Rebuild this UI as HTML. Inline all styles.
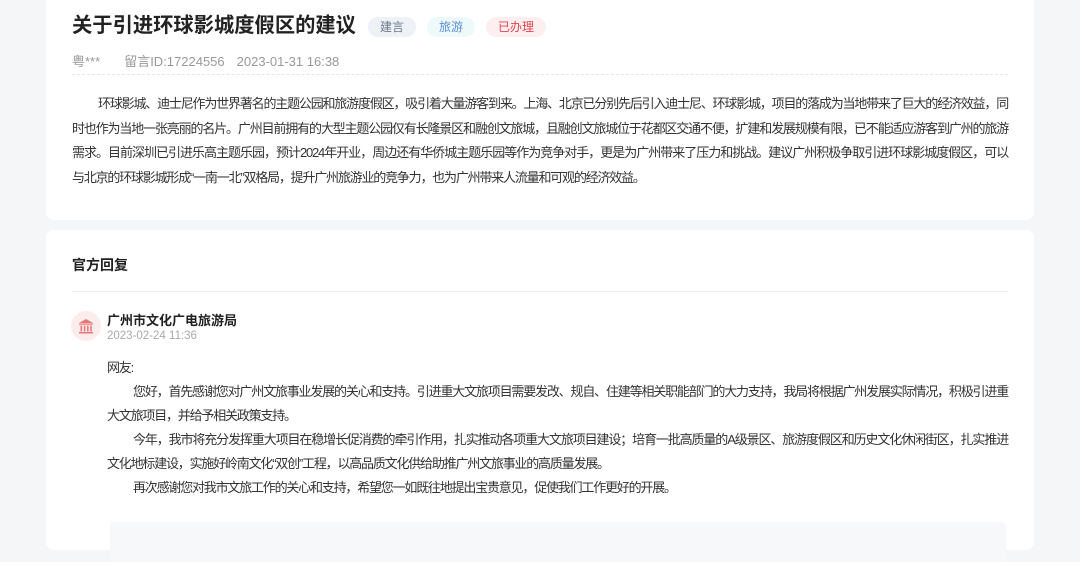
<!DOCTYPE html>
<html><head><meta charset="utf-8"><style>
body{margin:0;width:1080px;height:527px;overflow:hidden;background:#f5f6f8;font-family:"Liberation Sans","Noto Sans CJK SC",sans-serif;color:#333;}
.card{position:absolute;left:46px;width:988px;background:#fff;border-radius:8px;}
.tag{display:inline-block;height:20px;line-height:20px;padding:0 12px;border-radius:10px;font-size:12px;margin-left:8px;vertical-align:middle;font-weight:normal;}
p{margin:0;}
.j{display:block;white-space:nowrap;text-align:justify;text-align-last:justify;}
.l{display:block;white-space:nowrap;}
.i{padding-left:26px;}
</style></head><body>
<div style="position:absolute;left:72px;top:0;width:205px;height:4px;background:#eeeff2;"></div>
<div class="card" style="top:-10px;height:230px;">
 <div style="position:absolute;left:26px;top:20px;font-size:20.3px;font-weight:bold;color:#222;line-height:32px;white-space:nowrap;">关于引进环球影城度假区的建议<span class="tag" style="margin-left:12px;background:#eef2f7;color:#6a7889;">建言</span><span class="tag" style="margin-left:11px;background:#eefafa;color:#5b8fd6;">旅游</span><span class="tag" style="margin-left:11px;background:#fdeef0;color:#e0434f;">已办理</span></div>
 <div style="position:absolute;left:26px;top:61px;font-size:13px;color:#999;white-space:nowrap;">粤***<span style="margin-left:24px;">留言ID:17224556</span><span style="margin-left:12px;">2023-01-31 16:38</span></div>
 <div style="position:absolute;left:26px;right:26px;top:84px;border-top:1px dashed #e6e6e6;"></div>
 <div style="position:absolute;left:26px;width:936px;top:102px;font-size:13px;letter-spacing:-1.2px;line-height:24.5px;color:#333;">
  <span class="j i">环球影城、迪士尼作为世界著名的主题公园和旅游度假区，吸引着大量游客到来。上海、北京已分别先后引入迪士尼、环球影城，项目的落成为当地带来了巨大的经济效益，同</span>
  <span class="j">时也作为当地一张亮丽的名片。广州目前拥有的大型主题公园仅有长隆景区和融创文旅城，且融创文旅城位于花都区交通不便，扩建和发展规模有限，已不能适应游客到广州的旅游</span>
  <span class="j">需求。目前深圳已引进乐高主题乐园，预计2024年开业，周边还有华侨城主题乐园等作为竞争对手，更是为广州带来了压力和挑战。建议广州积极争取引进环球影城度假区，可以</span>
  <span class="l">与北京的环球影城形成“一南一北”双格局，提升广州旅游业的竞争力，也为广州带来人流量和可观的经济效益。</span>
 </div>
</div>
<div class="card" style="top:230px;height:320px;">
 <div style="position:absolute;left:26px;top:25px;font-size:14px;font-weight:bold;color:#222;">官方回复</div>
 <div style="position:absolute;left:26px;right:26px;top:61px;border-top:1px solid #ececec;"></div>
 <div style="position:absolute;left:25px;top:81px;width:30px;height:30px;border-radius:50%;background:#fdecec;">
  <svg width="30" height="30" viewBox="0 0 30 30"><g fill="#e8777a"><path d="M15 8 L22 12 H8 Z"/><rect x="8" y="12.5" width="14" height="1.2"/><rect x="9.5" y="14.5" width="1.6" height="6"/><rect x="12.8" y="14.5" width="1.6" height="6"/><rect x="16" y="14.5" width="1.6" height="6"/><rect x="19.2" y="14.5" width="1.6" height="6"/><rect x="8" y="21" width="14" height="1.5"/></g></svg>
 </div>
 <div style="position:absolute;left:61px;top:80px;font-size:13px;font-weight:bold;color:#222;">广州市文化广电旅游局</div>
 <div style="position:absolute;left:61px;top:100px;font-size:11.5px;color:#aaa;">2023-02-24 11:36</div>
 <div style="position:absolute;left:61px;width:901px;top:126px;font-size:13px;letter-spacing:-1.2px;line-height:24px;color:#333;">
  <span class="l">网友:</span>
  <span class="j i">您好，首先感谢您对广州文旅事业发展的关心和支持。引进重大文旅项目需要发改、规自、住建等相关职能部门的大力支持，我局将根据广州发展实际情况，积极引进重</span>
  <span class="l">大文旅项目，并给予相关政策支持。</span>
  <span class="j i">今年，我市将充分发挥重大项目在稳增长促消费的牵引作用，扎实推动各项重大文旅项目建设；培育一批高质量的A级景区、旅游度假区和历史文化休闲街区，扎实推进</span>
  <span class="l">文化地标建设，实施好岭南文化“双创”工程，以高品质文化供给助推广州文旅事业的高质量发展。</span>
  <span class="l i">再次感谢您对我市文旅工作的关心和支持，希望您一如既往地提出宝贵意见，促使我们工作更好的开展。</span>
 </div>
 <div style="position:absolute;left:64px;width:896px;top:292px;height:40px;background:#f7f8fa;border-radius:4px;"></div>
</div>
</body></html>
